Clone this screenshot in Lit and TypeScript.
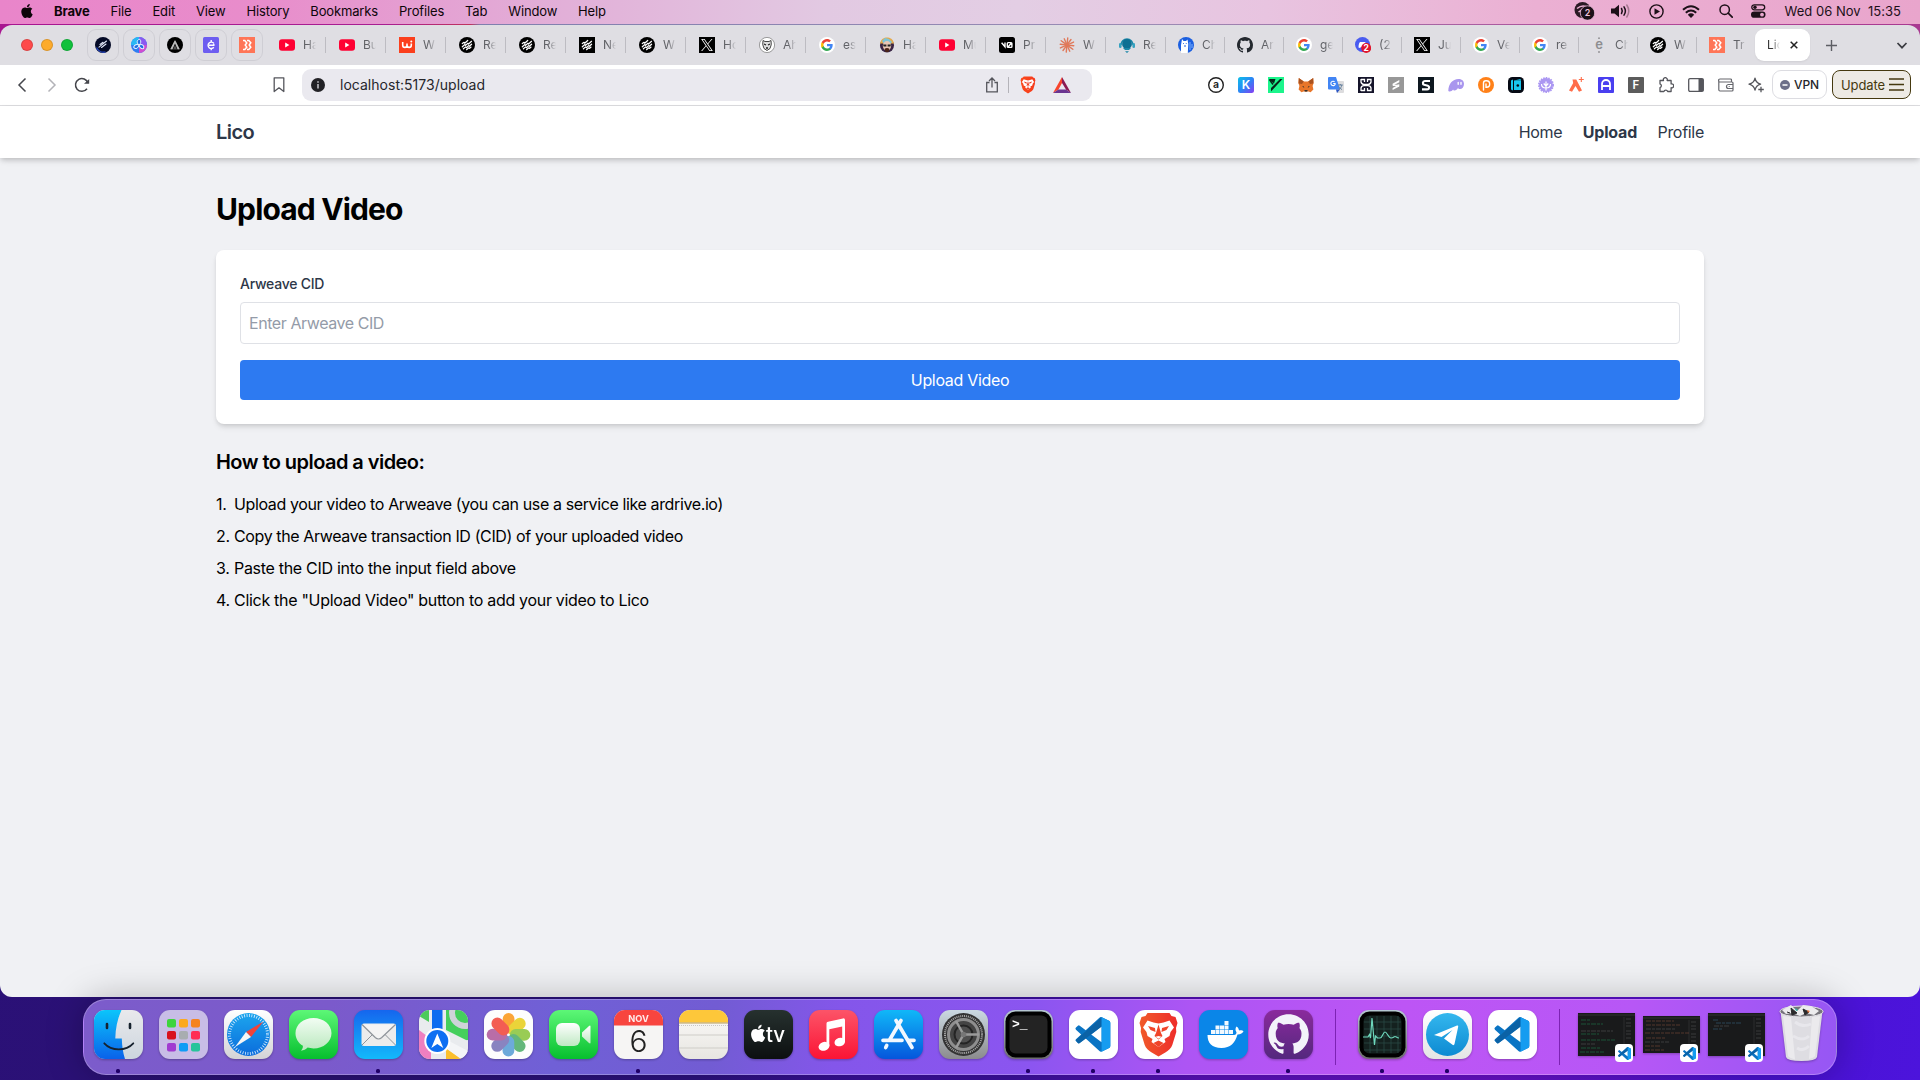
import { LitElement, html, svg, css, SVGTemplateResult } from "lit";
import { customElement } from "lit/decorators.js";
import { classMap } from "lit/directives/class-map.js";

type Art = SVGTemplateResult;

/* ---------- shared glyphs ---------- */
const GITHUB = "M8 0C3.58 0 0 3.58 0 8c0 3.54 2.29 6.53 5.47 7.59.4.07.55-.17.55-.38 0-.19-.01-.82-.01-1.49-2.01.37-2.53-.49-2.69-.94-.09-.23-.48-.94-.82-1.13-.28-.15-.68-.52-.01-.53.63-.01 1.08.58 1.23.82.72 1.21 1.87.87 2.33.66.07-.52.28-.87.51-1.07-1.78-.2-3.64-.89-3.64-3.95 0-.87.31-1.59.82-2.15-.08-.2-.36-1.02.08-2.12 0 0 .67-.21 2.2.82.64-.18 1.32-.27 2-.27.68 0 1.36.09 2 .27 1.53-1.04 2.2-.82 2.2-.82.44 1.1.16 1.92.08 2.12.51.56.82 1.27.82 2.15 0 3.07-1.87 3.75-3.65 3.95.29.25.54.73.54 1.48 0 1.07-.01 1.93-.01 2.2 0 .21.15.46.55.38A8.013 8.013 0 0016 8c0-4.42-3.58-8-8-8z";
const APPLE = "M12.152 6.896c-.948 0-2.415-1.078-3.96-1.04-2.04.027-3.91 1.183-4.961 3.014-2.117 3.675-.546 9.103 1.519 12.09 1.013 1.454 2.208 3.09 3.792 3.039 1.52-.065 2.09-.987 3.935-.987 1.831 0 2.35.987 3.96.948 1.637-.026 2.676-1.48 3.676-2.948 1.156-1.688 1.636-3.325 1.662-3.415-.039-.013-3.182-1.221-3.22-4.857-.026-3.04 2.48-4.494 2.597-4.559-1.429-2.09-3.623-2.324-4.39-2.376-2-.156-3.675 1.09-4.61 1.09zM15.53 3.83c.843-1.012 1.4-2.427 1.245-3.83-1.207.052-2.662.805-3.532 1.818-.78.896-1.454 2.338-1.273 3.714 1.338.104 2.715-.688 3.559-1.701";
const XMARK = "M14.234 10.162 22.977 0h-2.072l-7.591 8.824L7.251 0H.258l9.168 13.343L.258 24H2.33l8.016-9.318L16.749 24h6.993zm-2.837 3.299-.929-1.329L3.076 1.56h3.182l5.965 8.532.929 1.329 7.754 11.09h-3.182z";
const VSCODE = "M23.15 2.587L18.21.21a1.494 1.494 0 0 0-1.705.29l-9.46 8.63-4.12-3.128a.999.999 0 0 0-1.276.057L.327 7.261A1 1 0 0 0 .326 8.74L3.899 12 .326 15.26a1 1 0 0 0 .001 1.479L1.65 17.94a.999.999 0 0 0 1.276.057l4.12-3.128 9.46 8.63a1.492 1.492 0 0 0 1.704.29l4.942-2.377A1.5 1.5 0 0 0 24 20.06V3.939a1.5 1.5 0 0 0-.85-1.352zm-5.146 14.861L10.826 12l7.178-5.448v10.896z";

const code = svg`<path d=${VSCODE} fill="#0a74c4"/><path d="M.3 15.9 18 .1V6.5L2.9 18A1 1 0 0 1 1.6 17.9z" fill="#0b62a6"/><path d="M18 .15 23.15 2.59Q24 3 24 3.94V20.06Q24 21 23.15 21.4L18 23.9z" fill="#169cf0"/>`;
const google = svg`<circle cx="8" cy="8" r="8" fill="#fff"/><g transform="translate(1.500 1.500) scale(.54)"><path fill="#4285f4" d="M22.56 12.25c0-.78-.07-1.53-.2-2.25H12v4.26h5.92c-.26 1.37-1.04 2.53-2.21 3.31v2.77h3.57c2.08-1.92 3.28-4.74 3.28-8.09z"/><path fill="#34a853" d="M12 23c2.97 0 5.46-.98 7.28-2.66l-3.57-2.77c-.98.66-2.23 1.06-3.71 1.06-2.86 0-5.29-1.93-6.16-4.53H2.18v2.84C3.99 20.53 7.7 23 12 23z"/><path fill="#fbbc05" d="M5.84 14.09c-.22-.66-.35-1.36-.35-2.09s.13-1.43.35-2.09V7.07H2.18C1.43 8.55 1 10.22 1 12s.43 3.45 1.18 4.93l2.85-2.22.81-.62z"/><path fill="#ea4335" d="M12 5.38c1.62 0 3.06.56 4.21 1.64l3.15-3.15C17.45 2.09 14.97 1 12 1 7.7 1 3.99 3.47 2.18 7.07l3.66 2.84c.87-2.6 3.3-4.53 6.16-4.53z"/></g>`;
const youtube = svg`<rect y="2.2" width="16" height="11.6" rx="3" fill="#ff0033"/><path d="M6.2 5.6v4.8L10.4 8z" fill="#fff"/>`;
const weave = svg`<g stroke="#fff" stroke-width="1.25" stroke-linecap="round" stroke-linejoin="round" fill="none"><path d="M3.300 6.600l1.800-1.300 .6.900 3-2.700M3.300 9.800l2.600-2.300 .7.900 2.300-2.100 .7.700 2.900-2.700M4.400 11.800l2.200-1.900 .7.800 2.300-2.100 .7.700 2.300-2.100M7.500 12.700l2.200-1.900 .7.600 1.600-1.300"/></g>`;
const weaveRound = svg`<circle cx="8" cy="8" r="8" fill="#000"/>${weave}`;
const weaveSquare = svg`<rect width="16" height="16" fill="#000"/>${weave}`;
const twitter = svg`<rect width="16" height="16" fill="#000"/><path d=${XMARK} transform="translate(2 2) scale(.5)" fill="#fff"/>`;
const blitz = svg`<rect width="16" height="16" fill="#ff7557"/><path d="M4 3.600h1.800L7.800 6 6.200 8l1.600 2.100L5.800 12.400H4M8 3.600h1.800l2 2.200L10.200 8l1.600 2.200-2 2.200H8" stroke="#fff" stroke-width="1.500" fill="none"/>`;

/* ---------- tab favicons, 16x16 ---------- */
const favs: Record<string, Art> = {
  youtube, google, weaveRound, weaveSquare, twitter, blitz,
  comet: svg`<circle cx="8" cy="8" r="8" fill="#050a26"/><path d="M1.500 10.500a7 7 0 0 0 9 4.300" stroke="#2444b8" stroke-width="1.300" fill="none"/><path d="M4 10.200L11.500 4M6.500 10.500l4.500-3.500M5 7.500l3-2.200" stroke="#dfe4f6" stroke-width="1.100" stroke-linecap="round"/>`,
  fan: svg`<circle cx="8" cy="8" r="8" fill="#2f7df2"/><path d="M8 0a8 8 0 0 1 8 8L8 8z" fill="#8a5af0"/><path d="M8 16a8 8 0 0 0 8-8H8z" fill="#d04dd0"/><path d="M0 8a8 8 0 0 1 8-8v8z" fill="#28b8f4"/><g fill="#1f6fe0" stroke="#e6f4ff" stroke-width="1"><path id="b" d="M8 8C5 5.500 6 2.500 8.800 2.300 10.500 4 10 6.500 8 8z"/><path d="M8 8C5 5.500 6 2.500 8.800 2.300 10.500 4 10 6.500 8 8z" transform="rotate(120 8 8)"/><path d="M8 8C5 5.500 6 2.500 8.800 2.300 10.500 4 10 6.500 8 8z" transform="rotate(240 8 8)"/></g>`,
  tent: svg`<circle cx="8" cy="8" r="8" fill="#000"/><path d="M7.600 3.500L3.200 12.200 5.400 12.500 8 6.500l2.600 6 2.200-.3L8.400 3.500z" fill="#bbb"/><path d="M8 8l2 4.500H6z" fill="#555"/>`,
  cent: svg`<rect width="16" height="16" rx="1.500" fill="#6d5df0"/><path d="M10.800 6.300A3.200 3.200 0 1 0 10.800 10.300M6 8.300h4.800V6.800M8.200 3v2M8.200 11v2.200" stroke="#fff" stroke-width="1.400" fill="none"/>`,
  wflame: svg`<rect width="16" height="16" fill="#fb3f1d"/><path d="M3.700 5v3.200a2.150 2.150 0 0 0 4.300 0V6.500 8.200a2.150 2.150 0 0 0 4.300 0V6.500" stroke="#fff" stroke-width="1.600" fill="none"/><circle cx="12.300" cy="4.500" r="1" fill="#fff"/>`,
  raccoon: svg`<circle cx="8" cy="8" r="7.600" fill="#fff" stroke="#777" stroke-width=".7"/><path d="M4 3.500l2 1h4l2-1 .3 4L11 11.500 8 13.500 5 11.500 3.700 7.500z" fill="#ddd" stroke="#333" stroke-width=".9"/><path d="M5 7l2 1M11 7l-2 1M7 11h2" stroke="#222" stroke-width="1.300"/>`,
  hacker: svg`<circle cx="8" cy="8.500" r="7" fill="#3a2545"/><path d="M1 6.500C2 2 5 .5 8 .5s6 1.500 7 6z" fill="#e6a94b"/><path d="M3 4l3-3 4 1 3 3-2 2H5z" fill="#7cc5d8"/><ellipse cx="8" cy="8.800" rx="4.200" ry="4.800" fill="#e8c6b4"/><path d="M4 7.500h3.400v2H4.600zM8.600 7.500H12l-.6 2H8.600z" fill="#222"/><path d="M5.500 12c1.500-1.500 3.500-1.500 5 0L9.500 15h-3z" fill="#4a2418"/>`,
  vzero: svg`<rect width="16" height="16" rx="2.500" fill="#000"/><path d="M2.600 5.800L6 9.800V5.600M8.300 6.400v3.200q0 .8.800.8h3q.8 0 .8-.8V6.400q0-.8-.8-.8h-3q-.8 0-.8.800zM9 10l3.500-4" stroke="#fff" stroke-width="1.400" fill="none"/>`,
  burst: svg`<g stroke="#e0795a" stroke-width="1.400" stroke-linecap="round">${[0, 1, 2, 3, 4, 5, 6, 7, 8, 9, 10, 11].map((i) => svg`<path d="M8 7V${i % 2 ? 1.2 : .8}" transform="rotate(${i * 30 + 6} 8 8)"/>`)}</g><circle cx="8" cy="8" r="2" fill="#e0795a"/>`,
  headset: svg`<path d="M2 8a6 6 0 0 1 12 0" fill="none" stroke="#1c87a8" stroke-width="1.600"/><circle cx="8" cy="7" r="4.900" fill="#0d6f93"/><rect y="6" width="2.600" height="5" rx="1.300" fill="#36a2c0"/><rect x="13.400" y="6" width="2.600" height="5" rx="1.300" fill="#36a2c0"/><path d="M4 11l2 2h4l2-2M6 14.200h4L8 16z" fill="#1c87a8"/>`,
  llama: svg`<circle cx="8" cy="8" r="8" fill="#1c5fe0"/><path d="M3 16V8l1-6 1.500 2H8L9.500 2.500l.8 4.500-.5 9z" fill="#fff"/><path d="M5 6.500h.8M7.800 6.500h.8M6 9h2" stroke="#1c5fe0" stroke-width="1.200"/><path d="M12 5v8M14 7v4" stroke="#7fb4ff" stroke-width="1"/>`,
  github: svg`<path d=${GITHUB} fill="#24292f"/>`,
  discord: svg`<circle cx="7.500" cy="7.500" r="7.500" fill="#4a5cf0"/><path d="M3.500 10.500c0-3 .8-5 1.500-5.500h5c1 1 1.500 3 1.500 5l-2 1-1-1H6l-1 1z" fill="#fff"/><circle cx="11.200" cy="11" r="5" fill="#e0142c"/><text x="11.200" y="14" font-size="8.500" font-weight="700" text-anchor="middle" fill="#fff" font-family="Inter">2</text>`,
  edot: svg`<text x="8" y="12" font-size="13" font-weight="600" text-anchor="middle" fill="#8d8d90" font-family="Inter">e</text><circle cx="8" cy="1.200" r=".9" fill="#8d8d90"/><circle cx="8" cy="15" r=".9" fill="#8d8d90"/>`,
};
const tabs: [string, string][] = [
  ["youtube", "Ha"], ["youtube", "Bu"], ["wflame", "W"], ["weaveRound", "Re"], ["weaveRound", "Re"], ["weaveSquare", "Ne"], ["weaveRound", "W"],
  ["twitter", "Ho"], ["raccoon", "Ah"], ["google", "es"], ["hacker", "Ha"], ["youtube", "Mu"], ["vzero", "Pr"], ["burst", "W"], ["headset", "Re"],
  ["llama", "Ch"], ["github", "Ar"], ["google", "ge"], ["discord", "(2"], ["twitter", "Ju"], ["google", "Ve"], ["google", "re"], ["edot", "Ch"], ["weaveRound", "W"], ["blitz", "Tr"],
];

/* ---------- toolbar extensions, 16x16 ---------- */
const glyph = (c: string, size: number, fill = "#fff", y = 12.2) => svg`<text x="8" y=${y} font-size=${size} font-weight="600" text-anchor="middle" fill=${fill} font-family="Inter">${c}</text>`;
const extensions: Art[] = [
  svg`<circle cx="8" cy="8" r="7.300" fill="none" stroke="#222" stroke-width="1.400"/>${glyph("a", 10.5, "#222", 11.4)}`,
  svg`<defs><linearGradient id="kg" x1="0" y1="0" x2="1" y2="1"><stop offset="0" stop-color="#0bc0e8"/><stop offset=".5" stop-color="#2b86f5"/><stop offset="1" stop-color="#8a3cf2"/></linearGradient></defs><rect width="16" height="16" rx="2.500" fill="url(#kg)"/>${glyph("K", 12, "#fff", 12.4)}`,
  svg`<rect width="16" height="16" fill="#1cf58c"/><path d="M1 2h6.500L6 6.500zM14.500 2L3 14.500V11L12 2z" fill="#06251a"/><path d="M1.500 2.500L5 7.500" stroke="#06251a" stroke-width="1.500"/>`,
  svg`<path d="M.8 1l5 3.500h4.400L15.200 1l.4 5-1 3 .8 3.500-2.800 2.800-3-1-1.600.8-1.600-.8-3 1L.6 12.500 1.400 9 .4 6z" fill="#e8762a"/><path d="M.8 1l5 3.500L4 7 .6 6.500zM15.200 1l-5 3.500L12 7l3.400-.5z" fill="#a9521f"/><path d="M4 9l2 .5.2 1.500zM12 9l-2 .5-.2 1.500zM6.500 13h3v1.500h-3z" fill="#333"/>`,
  svg`<path d="M6 4h9a1 1 0 0 1 1 1v10a1 1 0 0 1-1 1H9z" fill="#dcdcde"/><path d="M1 0h7l4 12.500H1a1 1 0 0 1-1-1V1a1 1 0 0 1 1-1z" fill="#4285f4"/><path d="M8 12.500h4L9 16z" fill="#2a56c6"/><path d="M7.600 6.500H5.200M7.300 6.500A2.200 2.200 0 1 1 6.600 4.800" stroke="#fff" stroke-width="1.100" fill="none"/><path d="M9.800 8h5M12.300 7v1M13.800 8c-.3 2-1.500 3.500-3 4.500M11 9.500c.8 1.500 1.800 2.500 3 3" stroke="#607d9b" stroke-width="1" fill="none"/>`,
  svg`<rect width="16" height="16" fill="#15142a"/><path d="M3 2v3a3 3 0 0 0 3 2.300h4A3 3 0 0 0 13 5V2.500H9.500V5M3 2.500h3.500V5M3 14v-3a3 3 0 0 1 3-2.300h4a3 3 0 0 1 3 2.300v2.500H9.500V11M3 13.500h3.500V11M8 7v2" stroke="#fff" stroke-width="1.300" fill="none"/>`,
  svg`<rect width="16" height="16" fill="#989898"/><path d="M11.300 3L4.600 6.800v2l6.700-3.600zM11.300 7.200L4.600 11v2l6.700-3.600z" fill="#fff"/><path d="M5 7.500l6 2M5 8.500l6-.5" stroke="#fff" stroke-width="1"/>`,
  svg`<rect width="16" height="16" fill="#0e1820"/><path d="M12 4H6.800a1.900 1.900 0 0 0-.6 3.700l3.600 1a1.900 1.900 0 0 1-.6 3.700H4" stroke="#fff" stroke-width="2.200" fill="none"/>`,
  svg`<path d="M.3 13.500C.5 7 4.500 2 10.500 2 14.500 2 16 4.500 16 7c0 3-2 5-4 5-1 0-1.600-.4-2-1-.8 1.400-2 2.500-3.500 2.500-.8 0-1.200-.4-1.300-1C4.300 13.600 3 14.500 1.800 14.500 1 14.500.3 14.200.3 13.500z" fill="#a996ee"/><path d="M10.200 5.500v1.800M13 5.500v1.800" stroke="#fff" stroke-width="1.400" stroke-linecap="round"/>`,
  svg`<circle cx="8" cy="8" r="8" fill="#ff8119"/><path d="M5.500 13V6Q5.500 3.800 7.700 3.800h.8a3.200 3.200 0 0 1 0 6.400H8V7" stroke="#fff" stroke-width="1.400" fill="none" stroke-linecap="round"/>`,
  svg`<rect width="16" height="16" rx="4.500" fill="#060a14"/><path d="M3 3.500l2-1v11l-2-1zM6 3.500h7v9.500H6z" fill="#19c7ef"/><path d="M6 3.500L12.500 2 13 3.500z" fill="#19c7ef"/><circle cx="9.800" cy="8.500" r="1.300" fill="#060a14"/>`,
  svg`<circle cx="8" cy="8" r="7" fill="#ab97f2" stroke="#ab97f2" stroke-width="2" stroke-dasharray="1.500 1"/><path d="M8 4.500v9M3.500 7c0 2.500 2 4 4.500 4s4.500-1.500 4.500-4M5.700 6.500L8 9l2.300-2.500" stroke="#fff" stroke-width="1.200" fill="none"/>`,
  svg`<path d="M4.500 2.500h3.800L14 13.500l-3 1.300L7.500 9 4 14.800 1 13.500 5.200 6z" fill="#ff6d4a"/><path d="M13.300 0v5M10.800 2.500h5" stroke="#ff6d4a" stroke-width="1.100"/>`,
  svg`<rect width="16" height="16" rx="1" fill="#4a3ff0"/><path d="M4 13V7a4 4 0 0 1 8 0v6M4 9h8" stroke="#fff" stroke-width="1.800" fill="none"/>`,
  svg`<rect width="16" height="16" rx="1" fill="#5c5c5c"/>${glyph("F", 11.5)}`,
  svg`<path d="M2 3.500h3.500a2 2 0 1 1 3.600 0h4v3.400a2 2 0 1 1 0 3.800V14.500H9.700a2 2 0 0 0-3.800 0H2v-3.800a2 2 0 0 0 0-3.800z" fill="none" stroke="#55565c" stroke-width="1.300" stroke-linejoin="round"/>`,
  svg`<rect x=".7" y="1.700" width="14.600" height="12.600" rx="1.300" fill="none" stroke="#55565c" stroke-width="1.300"/><rect x="10.500" y="2" width="4.800" height="12" fill="#55565c"/>`,
  svg`<path d="M13.500 5V3a1 1 0 0 0-1-1H2a1.300 1.300 0 0 0 0 3h12a1 1 0 0 1 1 1v7a1 1 0 0 1-1 1H2a1.300 1.300 0 0 1-1.200-1.300V3.500M15 7.500h-4.500a2 2 0 0 0 0 4H15M10.700 9.500h1" fill="none" stroke="#66676d" stroke-width="1.200"/>`,
  svg`<path d="M7 1.200c.7 3.700 2.200 5.200 5.600 6-3.400.9-4.900 2.400-5.600 6-.7-3.600-2.200-5.100-6-6 3.800-.8 5.300-2.300 6-6z" fill="none" stroke="#55565c" stroke-width="1.300" stroke-linejoin="round"/><path d="M13 9.800v5.500M10.300 12.500h5.500" stroke="#fff" stroke-width="3.500"/><path d="M13 9.800v5.500M10.300 12.500h5.500" stroke="#55565c" stroke-width="1.300"/>`,
];

const lion = svg`<path d="M13.500 3h22l2 3 4 1 2 6-1.500 5 .3 4-4 13c-1 3-4 5.500-7 7.500l-6.800 4-6.800-4c-3-2-6-4.500-7-7.500l-4-13 .3-4L5.500 13l2-6 4-1z" fill="url(#lionfill)"/><path d="M24.500 13.500l5-1 6-2 4.500 7-3.500 4.500-1 4-5 3 1 3-7 5-7-5 1-3-5-3-1-4L9 17.500l4.500-7 6 2z" fill="#fff"/><path d="M14 16l7 2 .5 4-5-2zM35 16l-7 2-.5 4 5-2zM24.500 14.500l2.500 8.500 1.500 3-4 3.500-4-3.500 1.500-3zM19.500 33l5-2.500 5 2.500-5 4z" fill="#f0452a"/><path d="M24.500 26l3 .8-3 2-3-2z" fill="#fff"/>`;

/* ---------- dock apps, 49x49 ---------- */
const tile = (fill: string) => svg`<rect width="49" height="49" rx="11" fill=${fill}/>`;
const vs = svg`${tile("#fff")}<g transform="translate(6.500 7) scale(1.450)">${code}</g>`;
const grad = (id: string, a: string, b: string) => svg`<linearGradient id=${id} x1="0" y1="0" x2="0" y2="1"><stop offset="0" stop-color=${a}/><stop offset="1" stop-color=${b}/></linearGradient>`;
const petals = ["#fb9a1c", "#e8cf1e", "#8cc63e", "#4fae6a", "#5a9fd6", "#7a74b8", "#b05a9c", "#f2473c"];
const padColors = ["#3ed43e", "#fba91e", "#f5831f", "#d8121f", "#a8adb0", "#ff2d55", "#a13bd0", "#0f9cf5", "#27c49a"];
interface App { art: Art; run?: boolean }
const apps: App[] = [
  { run: true, art: svg`<defs>${grad("fi", "#0bc5fb", "#0a62ea")}${grad("fr", "#e9e9ec", "#ccd6de")}<clipPath id="fc"><rect width="49" height="49" rx="11"/></clipPath></defs><g clip-path="url(#fc)"><rect width="49" height="49" fill="url(#fr)"/><path d="M0 0h27.500C23.500 9 21.500 18 21.300 28.500h6.500C28 36 29 43 31 49H0z" fill="url(#fi)"/><path d="M13 14v4M36 14v4" stroke="#16222e" stroke-width="2.600" stroke-linecap="round"/><path d="M10.300 33.300C17.500 41.300 32 41.300 39.300 33.300" fill="none" stroke="#16222e" stroke-width="1.800" stroke-linecap="round"/></g>` },
  { art: svg`${tile("#c8bde6")}${padColors.map((c, i) => svg`<rect x=${8 + (i % 3) * 12} y=${9 + Math.floor(i / 3) * 12} width="9" height="8.500" rx="2" fill=${c}/>`)}` },
  { art: svg`<defs>${grad("sf", "#ffffff", "#d3d3d6")}${grad("sb", "#1da6ee", "#0a6cdc")}</defs>${tile("url(#sf)")}<circle cx="24.500" cy="24.500" r="21.500" fill="url(#sb)"/><circle cx="24.500" cy="24.500" r="19" fill="none" stroke="#dff0ff" stroke-width="3" stroke-dasharray=".8 1.687"/><path d="M39.500 11.500L22 22l5 5z" fill="#f0433a"/><path d="M11 37l11-15 5 5z" fill="#f5f5f5"/>` },
  { art: svg`<defs>${grad("me", "#5df777", "#06bf2e")}${grad("mb", "#f2fdf3", "#b9e8bd")}</defs>${tile("url(#me)")}<path d="M24.500 8C14.500 8 6.500 14.500 6.500 23.200c0 5.200 2.900 9.800 7.400 12.500.2 2-.8 3.700-2 5 2.700-.2 5-1.200 6.700-3.100 1.900.5 3.800.8 5.900.8 10 0 18-6.600 18-15.200S34.500 8 24.500 8z" fill="url(#mb)"/>` },
  { run: true, art: svg`<defs>${grad("ma", "#1566ee", "#13b9fb")}</defs>${tile("url(#ma)")}<rect x="7.500" y="13.500" width="34.500" height="22.500" rx="2.500" fill="#ececec"/><path d="M8 35l12-12M41.500 35l-12-12" stroke="#8f959b" stroke-width="1"/><path d="M8 14.500l13.500 13.200q3 2.600 6 0L41.500 14.500" fill="#f4f4f4" stroke="#8f959b" stroke-width="1.200"/>` },
  { art: svg`<defs><clipPath id="mc"><rect width="49" height="49" rx="11"/></clipPath></defs><g clip-path="url(#mc)"><rect width="49" height="49" fill="#e9ebee"/><path d="M0 0h10v12L0 6z" fill="#4ccb5b"/><path d="M27 0h22v31L27 20z" fill="#45cf5c"/><circle cx="46" cy="3" r="13" fill="none" stroke="#cfd3d8" stroke-width="6"/><path d="M13 0h10.500v25H13z" fill="#0d6cf0"/><path d="M0 20l12 9v20H0z" fill="#ef7fc0"/><path d="M26 35l23-5v3L29 49h-3z" fill="#e9ebee"/><path d="M27 38l16 11H27z" fill="#fbbf2d"/><path d="M30 31l19 10v8h-7L28 39z" fill="#f4f5f7"/><circle cx="18.300" cy="31" r="13" fill="#fff"/><circle cx="18.300" cy="31" r="11" fill="#0e6ff2"/><path d="M18.300 23.500l6 14.500-6-4-6 4z" fill="#fff"/></g>` },
  { art: svg`${tile("#fdfdfd")}<g opacity=".88">${petals.map((c, i) => svg`<rect x="18.700" y="3" width="11.800" height="20.500" rx="5.900" fill=${c} transform="rotate(${i * 45} 24.500 24.800)"/>`)}</g>` },
  { art: svg`<defs>${grad("fg", "#5df777", "#06bf2e")}${grad("fw", "#ffffff", "#bfe9c3")}</defs>${tile("url(#fg)")}<rect x="7" y="13" width="24" height="23" rx="6" fill="url(#fw)"/><path d="M33 22.500l7-6.500q1.500-1 1.500.5v16q0 1.500-1.500.5l-7-6.500z" fill="url(#fw)"/>` },
  { run: true, art: svg`<defs><clipPath id="cc"><rect width="49" height="49" rx="11"/></clipPath></defs><g clip-path="url(#cc)"><rect width="49" height="49" fill="#f6f5f4"/><rect width="49" height="15.500" fill="#f8453f"/></g><text x="24.500" y="11.600" font-size="9.200" font-weight="700" fill="#ffeceb" text-anchor="middle" font-family="Inter">NOV</text><text x="24.500" y="41.500" font-size="30" font-weight="300" fill="#222" text-anchor="middle" font-family="Inter">6</text>` },
  { art: svg`<defs><clipPath id="nc"><rect width="49" height="49" rx="11"/></clipPath>${grad("nw", "#fbfaf9", "#e8e6e1")}</defs><g clip-path="url(#nc)"><rect width="49" height="49" fill="url(#nw)"/><rect width="49" height="12.500" fill="#fdc73a"/><path d="M0 13h49" stroke="#b79b55" stroke-width="1"/><path d="M0 15.500h49" stroke="#bbb" stroke-width=".8" stroke-dasharray="1 1"/><path d="M0 25h49M0 38h49" stroke="#cfcdc8" stroke-width="1"/></g>` },
  { art: svg`<defs>${grad("tv", "#26312f", "#0c0f10")}</defs>${tile("url(#tv)")}<path d=${APPLE} transform="translate(5.500 14.800) scale(.720)" fill="#fff"/><text x="22" y="32" font-size="20.500" font-weight="500" fill="#fff" font-family="Inter" letter-spacing="-.2">tv</text>` },
  { art: svg`<defs>${grad("mu", "#fc5468", "#fb1435")}</defs>${tile("url(#mu)")}<path d="M17.500 13.500q0-1.500 1.500-1.800l15-3.300q2-.3 2 1.500V31h-2.800V16.500L20.300 19.300V36h-2.800z" fill="#fff"/><ellipse cx="15" cy="36.300" rx="5.600" ry="4.300" fill="#fff" transform="rotate(-18 15 36.300)"/><ellipse cx="30.800" cy="32" rx="5.400" ry="4.200" fill="#fff" transform="rotate(-18 30.800 32)"/>` },
  { art: svg`<defs>${grad("as", "#10b8f8", "#0556dc")}</defs>${tile("url(#as)")}<g stroke="#f2f8ff" stroke-width="3.700" stroke-linecap="round"><path d="M27 10.500L15.500 30M12.700 35.500l-1 2M22 10.500L38 37.500M9 30.300h19M35 30.300h5"/></g>` },
  { art: svg`<defs>${grad("se", "#cbd9e2", "#8b8b8d")}</defs>${tile("url(#se)")}<circle cx="24.500" cy="24.500" r="21.500" fill="#333"/><circle cx="24.500" cy="24.500" r="18.500" fill="none" stroke="#aaa" stroke-width="2" stroke-dasharray="1 .937"/><circle cx="24.500" cy="24.500" r="15" fill="#444" stroke="#8e8e8e" stroke-width="3"/><circle cx="24.500" cy="24.500" r="9" fill="#4f4f4f" stroke="#242424" stroke-width="2"/><path d="M24.500 24.500L17 11M24.500 24.500H40M24.500 24.500L17 38" stroke="#9b9b9b" stroke-width="2.500"/><circle cx="24.500" cy="24.500" r="2.800" fill="#777"/>` },
  { run: true, art: svg`<defs>${grad("te", "#b6c8d2", "#6d6d6d")}</defs>${tile("url(#te)")}<rect x="1.500" y="1.500" width="46" height="46" rx="10" fill="#000"/><rect x="5.500" y="5.500" width="38" height="38" rx="6" fill="#232323"/><text x="8" y="17.500" font-size="13" font-weight="700" fill="#fff" font-family="Liberation Mono">&gt;_</text>` },
  { run: true, art: vs },
  { run: true, art: svg`<defs><linearGradient id="lionfill"><stop offset="0" stop-color="#f05a2a"/><stop offset="1" stop-color="#ee2d2a"/></linearGradient></defs>${tile("#fff")}${lion}` },
  { art: svg`${tile("#0a86e8")}<path d="M8.500 25h26.500c2-.3 2.500-1.500 2.500-2.800-1.500-2-1.200-4.200 0-5.700 1.600 1 2.400 2.500 2.500 4 1.500-.4 3.500-.2 4.500.8-.8 2-2.800 3.200-6 3.200C36 33 31.500 38 22.500 38 13 38 8.500 33 8.500 25z" fill="#fff"/><path d="M12 20h4v4h-4zM16.500 20h4v4h-4zM21 20h4v4h-4zM25.500 20h4v4h-4zM30 20h4v4h-4zM16.500 15.500h4v4h-4zM21 15.500h4v4h-4zM25.500 15.500h4v4h-4zM25.500 11h4v4h-4z" fill="#f2f9ff"/>` },
  { run: true, art: svg`<defs>${grad("gh", "#8a2a9c", "#54287e")}</defs>${tile("url(#gh)")}<path d=${GITHUB} transform="translate(4.300 4.300) scale(2.530)" fill="#f3f3fa"/>` },
];
const utils: App[] = [
  { run: true, art: svg`<defs>${grad("am", "#b6c8d2", "#6d6d6d")}</defs>${tile("url(#am)")}<rect x="1.500" y="1.500" width="46" height="46" rx="10" fill="#000"/><rect x="5.500" y="5.500" width="38" height="38" rx="6" fill="#14211f"/><path d="M12 6v37M19 6v37M26 6v37M33 6v37M40 6v37M6 12h37M6 19h37M6 26h37M6 33h37M6 40h37" stroke="#2a4a44" stroke-width=".8"/><path d="M5 27h5l1.500-2.500L12.500 28 14 8l2.500 27 1-9 2 2h2.500c2.500 0 3-6 5-6s3.500 6 6 6 3-1.500 4-1.500 2 1.500 4 1.500" fill="none" stroke="#6ed8bd" stroke-width="1.200"/>` },
  { run: true, art: svg`<defs>${grad("tg", "#34b7ee", "#0d8ad2")}${grad("tw", "#ffffff", "#e4e4e4")}</defs>${tile("url(#tw)")}<circle cx="24.500" cy="24.500" r="21.500" fill="url(#tg)"/><path d="M11 25L34 15.500q1.500-.5 1.200 1.200L31.500 34q-.5 1.800-2 .8L21 28.500 29.500 20 18.500 27z" fill="#fff"/>` },
  { art: vs },
];
const windows = [
  { h: 43, tone: "#1f7a4b", rows: [[3, 7, 10], [3, 11, 22], [3, 18, 32], [3, 21, 18], [3, 27, 34], [3, 31, 14], [3, 35, 20], [2, 39, 24]] },
  { h: 37, tone: "#7a4a38", rows: [[3, 5, 28], [3, 9, 34], [3, 13, 30], [2, 17, 44], [3, 22, 20], [2, 26, 24], [2, 30, 16], [2, 34, 20]] },
  { h: 43, tone: "#34617e", rows: [[5, 7, 6], [8, 10, 26], [6, 13, 16], [5, 16, 9]] },
];

const menus = ["Brave", "File", "Edit", "View", "History", "Bookmarks", "Profiles", "Tab", "Window", "Help"];
const steps = [
  "Upload your video to Arweave (you can use a service like ardrive.io)",
  "Copy the Arweave transaction ID (CID) of your uploaded video",
  "Paste the CID into the input field above",
  "Click the \"Upload Video\" button to add your video to Lico",
];

const icon = (art: Art, size: number, box = size) => html`<svg width=${size} height=${size} viewBox="0 0 ${box} ${box}">${art}</svg>`;

@customElement("mac-menubar")
class MacMenubar extends LitElement {
  static styles = css`
    :host { display: flex; align-items: center; height: 24px; box-sizing: border-box; padding: 0 19px 2px 20px; color: #0d0509; font-size: 13px; letter-spacing: -0.14px;
      background: linear-gradient(90deg, #e985ca 0%, #e88dcb 14%, #e2add7 28%, #e2c9e2 43%, #e3cee4 53%, #e8c4e0 66%, #ebb0d3 80%, #e9a5cc 100%); }
    svg { display: block; }
    .menus { display: flex; gap: 20.9px; margin-left: 20px; }
    .app { font-weight: 700; }
    .status { display: flex; align-items: center; margin-left: auto; gap: 18.4px; }
    .sound { margin-left: -3px; }
    .clock { white-space: pre; letter-spacing: 0.02px; color: #1c1018; }
  `;
  render() {
    return html`
      ${icon(svg`<path d=${APPLE} fill="#0d0509"/>`, 14, 24)}
      <div class="menus">${menus.map((m, i) => html`<span class=${classMap({ app: i === 0 })}>${m}</span>`)}</div>
      <div class="status">
        <svg width="21" height="18" viewBox="0 0 21 18"><circle cx="8.500" cy="8" r="8" fill="#2a1a24"/><path d="M3 6.500q5.500-4.500 11-1M4.500 10q4-3 7-2" stroke="#e9b0d2" stroke-width="1.500" fill="none"/><circle cx="13.500" cy="11" r="7.200" fill="#1c1018" stroke="#ecb8d8" stroke-width=".8"/><text x="13.500" y="14.200" font-size="9" font-weight="600" text-anchor="middle" fill="#efc3dc" font-family="Inter">2</text></svg>
        <svg class="sound" width="20" height="14" viewBox="0 0 20 14"><path d="M0 4.500h3.500L8 .8v12.400L3.500 9.500H0z" fill="#1c1018"/><path d="M10.500 4.500q1.500 2.500 0 5M13 2.800q2.800 4.200 0 8.400" stroke="#1c1018" stroke-width="1.500" fill="none" stroke-linecap="round"/><path d="M15.800 1q4 6 0 12" stroke="#a4778f" stroke-width="1.500" fill="none" stroke-linecap="round"/></svg>
        <svg width="15" height="15" viewBox="0 0 15 15"><circle cx="7.500" cy="7.500" r="6.600" fill="none" stroke="#1c1018" stroke-width="1.400"/><path d="M5.500 4.300v6.400L11 7.500z" fill="#1c1018"/></svg>
        <svg width="18" height="13" viewBox="0 0 18 13"><path d="M1 4.800q8-7 16 0M3.800 7.700q5.200-4.400 10.400 0" stroke="#1c1018" stroke-width="2" fill="none"/><path d="M5.800 9.700q3.200-2.700 6.400 0L9 13z" fill="#1c1018"/></svg>
        <svg width="14" height="14" viewBox="0 0 14 14"><circle cx="5.700" cy="5.700" r="4.700" fill="none" stroke="#1c1018" stroke-width="1.500"/><path d="M9.200 9.200l4 4" stroke="#1c1018" stroke-width="1.700" stroke-linecap="round"/></svg>
        <svg width="15" height="14" viewBox="0 0 15 14"><rect x=".8" y=".8" width="12.900" height="5" rx="2.500" fill="none" stroke="#1c1018" stroke-width="1.300"/><circle cx="4" cy="3.300" r="1.700" fill="#1c1018"/><rect y="7.500" width="14.500" height="6.300" rx="3.100" fill="#1c1018"/><circle cx="11" cy="10.700" r="1.900" fill="#e9a9cf"/></svg>
        <span class="clock">Wed 06 Nov  15:35</span>
      </div>`;
  }
}

@customElement("browser-chrome")
class BrowserChrome extends LitElement {
  static styles = css`
    :host { display: block; }
    svg { display: block; flex: none; }
    .strip { display: flex; align-items: center; height: 40px; padding: 0 11px 0 21px; background: #dfdee3; box-sizing: border-box; }
    .lights { display: flex; gap: 8px; width: 66px; }
    .light { width: 12px; height: 12px; border-radius: 50%; box-sizing: border-box; border: 1px solid #0002; }
    .red { background: #fe4a4b; } .amber { background: #fdab2c; } .green { background: #10c13c; }
    .pins { display: flex; gap: 4px; margin-right: 16px; }
    .pin { width: 32px; height: 32px; box-sizing: border-box; border: 1px solid #cfced4; border-radius: 9px; display: grid; place-items: center; }
    .tabs { display: flex; }
    .tab { display: flex; align-items: center; width: 60px; }
    .tab.tight { width: 59px; }
    .tab.last { width: 46px; }
    .tab.last::after { display: none; }
    .tab::after { content: ""; width: 1px; height: 16px; background: #bdbcc2; margin-left: 4px; }
    .title { flex: none; margin-left: 8px; width: 18px; white-space: nowrap; font-size: 12px; line-height: 16px; color: #616267; -webkit-mask-image: linear-gradient(90deg, #000 5px, transparent 13px); mask-image: linear-gradient(90deg, #000 5px, transparent 13px); }
    .active { display: flex; align-items: center; width: 55px; height: 32px; box-sizing: border-box; padding: 0 11px 0 12px; border-radius: 9px; background: #fff; box-shadow: 0 1px 2px #0001; }
    .active .title { margin: 0 5px 0 0; color: #333; }
    .new { margin-left: 16px; }
    .more { margin-left: auto; }
    .bar { display: flex; align-items: center; height: 41px; box-sizing: border-box; padding: 0 9px 1px 16px; background: #fff; border-bottom: 1px solid #dcdcdf; }
    .nav { display: flex; align-items: center; width: 256px; gap: 16px; }
    .url { display: flex; align-items: center; width: 790px; height: 32px; box-sizing: border-box; padding: 0 21px 0 9px; margin-left: 16px; border-radius: 9px; background: #eae9ef; }
    .addr { margin-left: 15px; margin-right: auto; font-size: 14px; letter-spacing: 0.02px; color: #26262b; }
    .rule { width: 1px; height: 16px; margin: 0 10px 0 9px; background: #b4b3b9; }
    .bat { margin-left: 16px; }
    .ext { display: flex; gap: 14px; margin-left: 116px; }
    .vpn { display: flex; align-items: center; gap: 4px; width: 55px; height: 29px; box-sizing: border-box; padding-left: 7px; margin-left: 8px; border: 1px solid #dcdce1; border-radius: 9px; font-size: 12px; font-weight: 500; letter-spacing: -0.1px; color: #26262b; }
    .update { display: flex; align-items: center; gap: 4px; width: 79px; height: 29px; box-sizing: border-box; padding-left: 8px; margin-left: 5px; border: 1px solid #45390f; border-radius: 8px; background: #edeae4; font-size: 13px; letter-spacing: -0.1px; color: #45390f; white-space: nowrap; }
  `;
  render() {
    return html`
      <div class="strip">
        <div class="lights"><span class="light red"></span><span class="light amber"></span><span class="light green"></span></div>
        <div class="pins">${["comet", "fan", "tent", "cent", "blitz"].map((k) => html`<span class="pin">${icon(favs[k], 16)}</span>`)}</div>
        <div class="tabs">${tabs.map(([k, t], i) => html`<div class=${classMap({ tab: true, tight: i >= 14, last: i === tabs.length - 1 })}>${icon(favs[k], 16)}<span class="title">${t}</span></div>`)}</div>
        <div class="active"><span class="title">Lic</span><svg width="8" height="8" viewBox="0 0 8 8"><path d="M.7.7l6.600 6.600M7.300.7L.7 7.300" stroke="#222" stroke-width="1.500"/></svg></div>
        <svg class="new" width="11" height="11" viewBox="0 0 11 11"><path d="M5.500 0v11M0 5.500h11" stroke="#5d5e64" stroke-width="1.400"/></svg>
        <svg class="more" width="14" height="9" viewBox="0 0 14 9"><path d="M2.500 2L7 6.700 11.500 2" stroke="#3b3c42" stroke-width="1.700" fill="none"/></svg>
      </div>
      <div class="bar">
        <div class="nav">
          <svg width="12" height="16" viewBox="0 0 12 16"><path d="M9.500 1.500L3 8l6.500 6.500" stroke="#45464c" stroke-width="1.500" fill="none"/></svg>
          <svg width="14" height="16" viewBox="0 0 14 16"><path d="M4.500 1.500L11 8l-6.500 6.500" stroke="#b3b3b8" stroke-width="1.500" fill="none"/></svg>
          <svg width="16" height="16" viewBox="0 0 16 16"><path d="M13 11.800A6.400 6.400 0 1 1 14 6" stroke="#45464c" stroke-width="1.500" fill="none"/><path d="M10 6.800h5.200V2z" fill="#45464c"/></svg>
        </div>
        <svg width="14" height="16" viewBox="0 0 14 16"><path d="M2.200.8h9.600v13.800L7 10.800l-4.800 3.800z" stroke="#55565c" stroke-width="1.300" fill="none" stroke-linejoin="round"/></svg>
        <div class="url">
          <svg width="14" height="14" viewBox="0 0 14 14"><circle cx="7" cy="7" r="7" fill="#222226"/><path d="M7 6v4.500M7 3.300v1.500" stroke="#c9c9ce" stroke-width="1.500"/></svg>
          <span class="addr">localhost:5173/upload</span>
          <svg width="14" height="16" viewBox="0 0 14 16"><path d="M4.500 5.500H1.700v9.300h10.600V5.500H9.500M7 10.500V1.200M4 4l3-3 3 3" stroke="#55565c" stroke-width="1.300" fill="none"/></svg>
          <span class="rule"></span>
          <svg width="18" height="18" viewBox="3 2 43 46"><defs><linearGradient id="lionfill"><stop offset="0" stop-color="#fb4a1c"/><stop offset="1" stop-color="#f53a1c"/></linearGradient></defs>${lion}</svg>
          <svg class="bat" width="18" height="16" viewBox="0 0 18 16"><path d="M9 0L0 16l5.500-3.500L9 6z" fill="#f8442c"/><path d="M9 0l9 16-5-3.500L9 6z" fill="#8c1a52"/><path d="M0 16h18l-5-3.500H5.500z" fill="#6a3590"/></svg>
        </div>
        <div class="ext">${extensions.map((e) => icon(e, 16))}</div>
        <div class="vpn"><svg width="10" height="10" viewBox="0 0 10 10"><circle cx="5" cy="5" r="5" fill="#6c6f89"/><path d="M2.500 5h5" stroke="#fff" stroke-width="1.300"/></svg>VPN</div>
        <div class="update">Update<svg width="15" height="13" viewBox="0 0 15 13"><path d="M0 1h15M0 6.500h15M0 12h15" stroke="#45390f" stroke-width="1.300"/></svg></div>
      </div>`;
  }
}

@customElement("lico-page")
class LicoPage extends LitElement {
  static styles = css`
    :host { display: block; flex: 1; background: #f0f1f4; color: #000; font-size: 16px; letter-spacing: -0.29px; }
    .top { height: 52px; background: #fff; box-shadow: 0 4px 6px -1px #0000001c, 0 2px 5px -1px #00000024; }
    .inner { display: flex; align-items: center; justify-content: space-between; width: 1488px; height: 52px; margin: 0 auto; color: #2d3748; }
    .brand { font-size: 20px; font-weight: 600; letter-spacing: -0.55px; }
    .links { display: flex; gap: 20.4px; }
    .on { font-weight: 700; letter-spacing: -0.2px; }
    main { display: block; width: 1488px; margin: 0 auto; padding-top: 33px; }
    h1 { margin: 0 0 23px; font-size: 30px; line-height: 36px; font-weight: 700; letter-spacing: -0.85px; }
    .card { background: #fff; border-radius: 8px; padding: 24px; box-shadow: 0 4px 6px -1px #0000001a, 0 2px 4px -1px #0000001a; height: 174px; box-sizing: border-box; }
    label { display: block; font-size: 14px; line-height: 20px; font-weight: 500; color: #2d3748; letter-spacing: -0.24px; margin-bottom: 8px; }
    input { display: block; width: 100%; height: 42px; box-sizing: border-box; border: 1px solid #dfe1e6; border-radius: 4px; padding: 0 8px; font: inherit; letter-spacing: -0.43px; outline: none; background: #fff; }
    input::placeholder { color: #949ba8; opacity: 1; }
    button { display: block; width: 100%; height: 40px; margin-top: 16px; border: 0; border-radius: 4px; background: #2d7af1; color: #fff; font: inherit; letter-spacing: -0.32px; padding: 0; }
    h2 { margin: 24px 0 16px; font-size: 20px; line-height: 28px; font-weight: 600; letter-spacing: -0.55px; }
    ol { list-style: none; margin: 0; padding: 0; display: grid; gap: 8px; line-height: 24px; }
    li { display: flex; letter-spacing: -0.3px; }
    li:nth-child(-n+2) { letter-spacing: -0.38px; }
    .num { width: 18px; }
  `;
  render() {
    return html`
      <div class="top"><div class="inner"><span class="brand">Lico</span><nav class="links"><span>Home</span><span class="on">Upload</span><span>Profile</span></nav></div></div>
      <main>
        <h1>Upload Video</h1>
        <div class="card"><label>Arweave CID</label><input placeholder="Enter Arweave CID"><button>Upload Video</button></div>
        <h2>How to upload a video:</h2>
        <ol>${steps.map((s, i) => html`<li><span class="num">${i + 1}.</span><span>${s}</span></li>`)}</ol>
      </main>`;
  }
}

@customElement("mac-dock")
class MacDock extends LitElement {
  static styles = css`
    :host { display: flex; box-sizing: border-box; width: 1754px; height: 76px; padding: 0 2px; border: 1px solid #ffffff40; border-radius: 23px; box-shadow: 0 0 36px #0004;
      background: linear-gradient(97deg, #7c5ccb 0%, #7b5acb 14%, #7060d6 27%, #725cd3 36%, #8456ea 43%, #8b55f0 54%, #ad55f4 63%, #bd55f5 75%, #b757f6 88%, #9657f4 100%); }
    svg { display: block; }
    .slot { position: relative; flex: none; width: 65px; display: flex; justify-content: center; padding-top: 10px; box-sizing: border-box; }
    .slot > svg { filter: drop-shadow(0 1px 1px #0004); }
    .run::after { content: ""; position: absolute; bottom: 1px; left: 30px; width: 4px; height: 4px; border-radius: 1.500px; background: #200066; }
    .sep { flex: none; width: 29px; display: flex; justify-content: center; padding-top: 9px; }
    .sep::after { content: ""; width: 1px; height: 56px; background: #7d22b4; }
    .mini { align-items: center; padding: 0 0 5px; }
    .badge { position: absolute; right: 6px; bottom: 12px; width: 18px; height: 18px; border-radius: 4px; background: #fff; display: grid; place-items: center; }
    .bin { padding-top: 4px; }
  `;
  render() {
    const app = (a: App) => html`<div class=${classMap({ slot: true, run: !!a.run })}>${icon(a.art, 49)}</div>`;
    return html`
      ${apps.map(app)}<div class="sep"></div>${utils.map(app)}<div class="sep"></div>
      ${windows.map((w) => html`<div class="slot mini">
        <svg width="57" height=${w.h} viewBox="0 0 57 ${w.h}"><rect width="57" height=${w.h} fill="#191a1b"/><path d="M0 2h57" stroke="#333" stroke-width="1"/><path d="M46 4v${w.h - 8}" stroke="#2c2d2e" stroke-width="1"/>${w.rows.map(([x, y, l], i) => svg`<path d="M${x} ${y}h${l}" stroke=${i % 3 === 2 ? "#555" : w.tone} stroke-width="1" stroke-dasharray="5 1 3 1" opacity=".6"/>`)}${[6, 10, 13, 18, 21, 25].map((y) => svg`<path d="M48 ${y}h5" stroke="#555" stroke-width=".8" opacity=".7"/>`)}</svg>
        <span class="badge">${icon(code, 13, 24)}</span></div>`)}
      <div class="slot bin"><svg width="45" height="58" viewBox="0 0 45 58">
        <path d="M1.500 7L7 53q1 4 15.500 4T38 53L43.500 7z" fill="#dedde2"/><path d="M4 12l5 40q3 3 7 3.500L12 13zM33 13l-3 42q4-.5 6-3L41 12z" fill="#ffffff66"/><path d="M16 18q8 6 16 2M14 32q10 6 16 0M18 44q6 4 12-2" stroke="#f2f2f5" stroke-width="3" fill="none" opacity=".5"/>
        <ellipse cx="22.500" cy="7.500" rx="21.500" ry="5.500" fill="#77757c"/><path d="M3 6l9-5 6 6 6-6 8 1 8 5-5 4-8-2-6 3-8-3-6 1z" fill="#ececee"/><path d="M12 4l6 5-5 2zM24 5l6 3-4 3zM8 8l3 1" fill="#2a2a2c" stroke="#2a2a2c"/><path d="M16 4l3 2-2 1z" fill="#27c0b0"/><path d="M28 6l3 1-2 2z" fill="#e2703a"/><ellipse cx="22.500" cy="7.500" rx="21.500" ry="5.500" fill="none" stroke="#e9e8ec" stroke-width="1"/>
      </svg></div>`;
  }
}

@customElement("app-root")
class AppRoot extends LitElement {
  static styles = css`
    :host { display: block; font-family: Inter, "Liberation Sans", sans-serif; }
    .desktop { position: relative; display: flex; flex-direction: column; width: 1920px; height: 1080px; overflow: hidden;
      background:
        linear-gradient(90deg, #a81590 0%, #a81d92 20%, #c0335f 24.500%, #7f7fae 25%, #9a8cb4 60%, #b04a98 84%, #a83890 100%) 0 0 / 1920px 60px no-repeat,
        linear-gradient(100deg, #2b1078 0%, #2a1274 25%, #2c1280 42%, #3a109c 50%, #3c10a0 57%, #5a10bc 66%, #6810c8 80%, #4a12d2 92%, #4c14dc 100%); }
    .window { display: flex; flex-direction: column; height: 972px; margin-top: 1px; border-radius: 12px; overflow: hidden; }
    mac-dock { position: absolute; left: 83px; top: 999px; }
  `;
  render() {
    return html`<div class="desktop">
      <mac-menubar></mac-menubar>
      <div class="window"><browser-chrome></browser-chrome><lico-page></lico-page></div>
      <mac-dock></mac-dock>
    </div>`;
  }
}
